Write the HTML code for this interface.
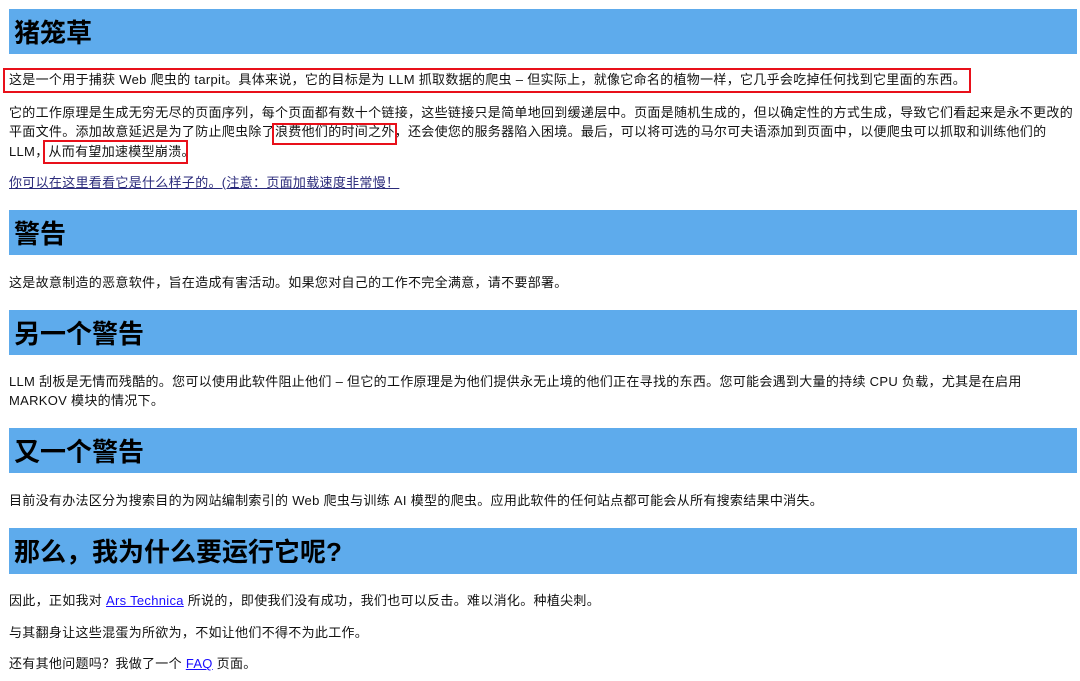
<!DOCTYPE html>
<html><head><meta charset="utf-8"><style>
body{margin:0;width:1080px;height:681px;background:#fff;position:relative;overflow:hidden;font-family:"Liberation Sans","Noto Sans CJK SC",sans-serif;color:#111;}
.h{position:absolute;left:9px;width:1068px;height:45px;background:#5eabec;}
.h span{position:absolute;left:5px;top:8px;font-size:26px;font-weight:bold;color:#000;line-height:32px;white-space:nowrap}
.t{position:absolute;left:9px;font-size:13px;line-height:20px;white-space:nowrap;letter-spacing:0.3px}
.box{position:absolute;border:2px solid #e8101a;box-sizing:border-box}
a{color:#1a0dff}
a.v{color:#2a2a7a}
</style></head><body>
<div class="h" style="top:9px"><span>猪笼草</span></div>
<div class="box" style="left:3px;top:68px;width:968px;height:25px"></div>
<div class="t" style="top:70px">这是一个用于捕获 Web 爬虫的 tarpit。具体来说，它的目标是为 LLM 抓取数据的爬虫 – 但实际上，就像它命名的植物一样，它几乎会吃掉任何找到它里面的东西。</div>
<div class="t" style="top:103px">它的工作原理是生成无穷无尽的页面序列，每个页面都有数十个链接，这些链接只是简单地回到缓递层中。页面是随机生成的，但以确定性的方式生成，导致它们看起来是永不更改的</div>
<div class="t" style="top:122px">平面文件。添加故意延迟是为了防止爬虫除了浪费他们的时间之外，还会使您的服务器陷入困境。最后，可以将可选的马尔可夫语添加到页面中，以便爬虫可以抓取和训练他们的</div>
<div class="t" style="top:142px">LLM，从而有望加速模型崩溃。</div>
<div class="box" style="left:272px;top:123px;width:125px;height:22px"></div>
<div class="box" style="left:43px;top:140px;width:145px;height:24px"></div>
<div class="t" style="top:173px"><a class="v" href="#">你可以在这里看看它是什么样子的。(注意：页面加载速度非常慢！</a></div>
<div class="h" style="top:210px"><span>警告</span></div>
<div class="t" style="top:273px">这是故意制造的恶意软件，旨在造成有害活动。如果您对自己的工作不完全满意，请不要部署。</div>
<div class="h" style="top:310px"><span>另一个警告</span></div>
<div class="t" style="top:372px">LLM 刮板是无情而残酷的。您可以使用此软件阻止他们 – 但它的工作原理是为他们提供永无止境的他们正在寻找的东西。您可能会遇到大量的持续 CPU 负载，尤其是在启用</div>
<div class="t" style="top:391px">MARKOV 模块的情况下。</div>
<div class="h" style="top:428px"><span>又一个警告</span></div>
<div class="t" style="top:491px">目前没有办法区分为搜索目的为网站编制索引的 Web 爬虫与训练 AI 模型的爬虫。应用此软件的任何站点都可能会从所有搜索结果中消失。</div>
<div class="h" style="top:528px;height:46px"><span>那么，我为什么要运行它呢?</span></div>
<div class="t" style="top:591px">因此，正如我对 <a href="#">Ars Technica</a> 所说的，即使我们没有成功，我们也可以反击。难以消化。种植尖刺。</div>
<div class="t" style="top:623px">与其翻身让这些混蛋为所欲为，不如让他们不得不为此工作。</div>
<div class="t" style="top:654px">还有其他问题吗？我做了一个 <a href="#">FAQ</a> 页面。</div>
</body></html>
